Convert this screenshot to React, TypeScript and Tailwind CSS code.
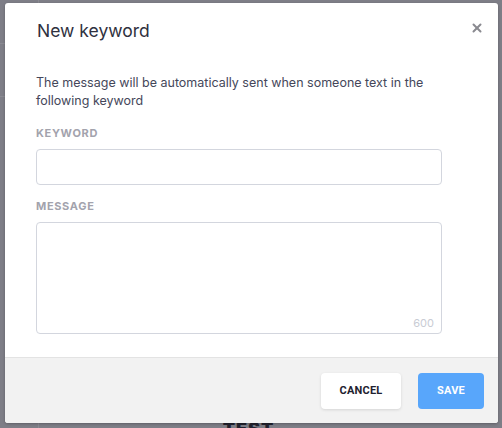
import { X } from "lucide-react";

const inter = "font-['Inter','Noto_Sans',sans-serif]";

function Field({ label, children }: { label: string; children: React.ReactNode }) {
  return (
    <div>
      <div className="text-[11px] font-bold tracking-[0.06em] text-[#a3a3ad] leading-[14px]">{label}</div>
      <div className="mt-[9px]">{children}</div>
    </div>
  );
}

export default function App() {
  return (
    <div className={`relative w-[502px] h-[428px] overflow-hidden bg-[#7e7e87] ${inter}`}>
      {/* page behind the dimmed overlay */}
      <div className="flex h-full">
        <div className="w-[39px] shrink-0 border-r border-[#8a8a92]">
          <div className="h-[44px] border-b border-[#8a8a92]" />
          <div className="h-[53px] border-b border-[#8a8a92]" />
        </div>
        <div className="flex-1 flex flex-col justify-end items-center">
          <div className="text-[18px] font-black text-[#22222e] leading-none translate-y-[10px] -translate-x-[22px] tracking-wider">
            TEST
          </div>
        </div>
      </div>

      {/* modal */}
      <div className="absolute left-[5px] top-[3px] w-[493px] h-[420px] bg-white rounded-[3px] shadow-[0_1px_3px_rgba(0,0,0,0.25)] flex flex-col overflow-hidden">
        <div className="flex items-start justify-between pl-[32px] pr-[14px] pt-[16px]">
          <h1 className="text-[17.5px] leading-[24px] text-[#2f3140] font-normal">New keyword</h1>
          <button className="mt-[2px] text-[#8a8a90]">
            <X size={14} strokeWidth={3.4} />
          </button>
        </div>

        <div className="flex-1 pl-[31px] pr-[56px] pt-[31px]">
          <p className="text-[12.5px] leading-[18px] text-[#45475a]">
            The message will be automatically sent when someone text in the following keyword
          </p>

          <div className="mt-[16px] flex flex-col gap-[14px]">
            <Field label="KEYWORD">
              <input className="block w-full h-[36px] rounded-[4px] border border-[#d3d6de] bg-white outline-none px-3 text-[13px]" />
            </Field>
            <Field label="MESSAGE">
              <div className="relative">
                <textarea className="block w-full h-[112px] resize-none rounded-[4px] border border-[#d3d6de] bg-white outline-none px-3 py-2 text-[13px]" />
                <span className="absolute right-[8px] bottom-[4px] text-[11px] text-[#c9ccd4] leading-[14px]">600</span>
              </div>
            </Field>
          </div>
        </div>

        <div className="h-[66px] shrink-0 bg-[#f2f2f2] border-t border-[#e3e3e3] flex items-start justify-end gap-[17px] pt-[15px] pr-[14px] font-['Roboto',sans-serif]">
          <button className="w-[80px] h-[36px] rounded-[4px] bg-white shadow-[0_1px_3px_rgba(0,0,0,0.12)] text-[11px] font-bold text-[#1e2230] tracking-[0.02em]">
            CANCEL
          </button>
          <button className="w-[66px] h-[36px] rounded-[4px] bg-[#58a6fb] text-[11px] font-bold text-white tracking-[0.02em]">
            SAVE
          </button>
        </div>
      </div>
    </div>
  );
}
